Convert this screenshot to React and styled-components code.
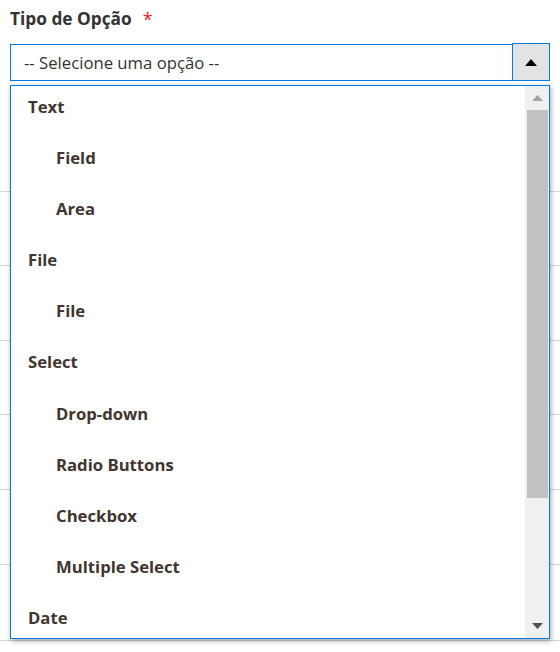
import React from "react";
import styled, { createGlobalStyle } from "styled-components";

const Global = createGlobalStyle`
  html, body { margin: 0; padding: 0; background: #fff; }
  body { font-family: "Open Sans", "Noto Sans", sans-serif; color: #333; }
  * { box-sizing: border-box; }
`;

const Page = styled.div`
  position: relative;
  width: 560px;
  height: 652px;
  overflow: hidden;
  background: #fff;
`;

const Field = styled.div`
  padding: 8px 10px 0 10px;
`;

const Label = styled.div`
  font-size: 17.3px;
  font-weight: 700;
  color: #333;
  line-height: 22px;
  height: 22px;
  display: flex;
  align-items: center;
  gap: 11px;
`;

const Required = styled.span`
  color: #e22626;
  font-size: 18px;
  font-weight: 400;
`;

const Control = styled.div`
  margin-top: 13px;
  display: flex;
  height: 38px;
`;

const SelectBox = styled.div`
  flex: 1;
  margin-top: 1px;
  height: 37px;
  border: 1px solid #007bdb;
  border-right: none;
  display: flex;
  align-items: center;
  padding-left: 13px;
  font-size: 16.7px;
  color: #333;
`;

const ArrowButton = styled.div`
  width: 38px;
  height: 38px;
  background: #e3e3e3;
  border: 1px solid #007bdb;
  display: flex;
  align-items: center;
  justify-content: center;
`;

const Rows = styled.div`
  margin-top: 60px;
  display: flex;
  flex-direction: column;
`;

const Row = styled.div`
  height: ${(p) => p.$h}px;
  border-bottom: 1px solid #d6d6d6;
`;

const Menu = styled.div`
  position: absolute;
  left: 10px;
  top: 85px;
  width: 540px;
  height: 554px;
  border: 1px solid #007bdb;
  background: #fff;
  box-shadow: 1px 2px 5px rgba(0, 0, 0, 0.35);
  display: flex;
`;

const List = styled.ul`
  list-style: none;
  margin: 0;
  padding: 9px 0 0 0;
  flex: 1;
  display: flex;
  flex-direction: column;
  gap: 27.1px;
  overflow: hidden;
`;

const Item = styled.li`
  line-height: 24px;
  height: 24px;
  font-size: 16.7px;
  font-weight: 700;
  color: #41362f;
  padding-left: ${(p) => (p.$child ? 45 : 17)}px;
  white-space: nowrap;
`;

const Track = styled.div`
  width: 24px;
  background: #f0f0f0;
  display: flex;
  flex-direction: column;
  align-items: center;
  padding-left: 1px;
`;

const ScrollBtn = styled.div`
  height: 24px;
  width: 100%;
  display: flex;
  align-items: center;
  justify-content: center;
`;

const Thumb = styled.div`
  width: 21px;
  height: 388px;
  background: #c1c1c1;
`;

const Spacer = styled.div`
  flex: 1;
`;

const Tri = ({ up, color, w = 11, h = 6 }) => (
  <svg width={w} height={h} viewBox={`0 0 ${w} ${h}`}>
    <polygon
      points={up ? `0,${h} ${w},${h} ${w / 2},0` : `0,0 ${w},0 ${w / 2},${h}`}
      fill={color}
    />
  </svg>
);

const items = [
  ["Text", false],
  ["Field", true],
  ["Area", true],
  ["File", false],
  ["File", true],
  ["Select", false],
  ["Drop-down", true],
  ["Radio Buttons", true],
  ["Checkbox", true],
  ["Multiple Select", true],
  ["Date", false],
];

const rowHeights = [51, 74, 75, 74, 75, 75, 76, 75];

export default function App() {
  return (
    <Page>
      <Global />
      <Field>
        <Label>
          Tipo de Opção <Required>*</Required>
        </Label>
        <Control>
          <SelectBox>-- Selecione uma opção --</SelectBox>
          <ArrowButton>
            <Tri up color="#000" w={12} h={7} />
          </ArrowButton>
        </Control>
      </Field>
      <Rows>
        {rowHeights.map((h, i) => (
          <Row key={i} $h={h} />
        ))}
      </Rows>
      <Menu>
        <List>
          {items.map(([t, c], i) => (
            <Item key={i} $child={c}>
              {t}
            </Item>
          ))}
        </List>
        <Track>
          <ScrollBtn>
            <Tri up color="#a3a3a3" w={11} h={6} />
          </ScrollBtn>
          <Thumb />
          <Spacer />
          <ScrollBtn>
            <Tri color="#505050" w={11} h={6} />
          </ScrollBtn>
        </Track>
      </Menu>
    </Page>
  );
}
